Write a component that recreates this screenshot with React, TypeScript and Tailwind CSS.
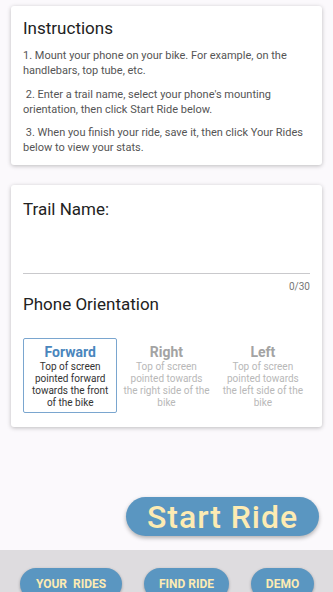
import React from 'react';

const options = [
  { title: 'Forward', desc: 'Top of screen pointed forward towards the front of the bike', selected: true },
  { title: 'Right', desc: 'Top of screen pointed towards the right side of the bike', selected: false },
  { title: 'Left', desc: 'Top of screen pointed towards the left side of the bike', selected: false },
];

export default function App() {
  return (
    <div className="flex h-[592px] w-[333px] flex-col overflow-hidden bg-[#fbf9fc] font-['Roboto',sans-serif]">
      <div className="flex-1 px-[11px] pt-[6px]">
        <div className="h-[159px] rounded-[3px] bg-white px-[12px] pt-[12px] shadow-[0_1px_4px_rgba(0,0,0,0.25)]">
          <h2 className="text-[17px] leading-[20px] text-[#222]">Instructions</h2>
          <div className="mt-[10px] text-[11px] leading-[15px] text-[#555]">
            <p>1. Mount your phone on your bike. For example, on the handlebars, top tube, etc.</p>
            <p className="mt-[9px]">&nbsp;2. Enter a trail name, select your phone's mounting orientation, then click Start Ride below.</p>
            <p className="mt-[8px]">&nbsp;3. When you finish your ride, save it, then click Your Rides below to view your stats.</p>
          </div>
        </div>

        <div className="mt-[20px] h-[242px] rounded-[3px] bg-white px-[12px] pt-[13px] shadow-[0_1px_4px_rgba(0,0,0,0.25)]">
          <div className="text-[17px] leading-[22px] text-[#222]">Trail Name:</div>
          <div className="mt-[53px] h-px bg-[#c9c9cc]" />
          <div className="mt-[7px] text-right text-[10px] leading-[12px] text-[#777]">0/30</div>
          <div className="text-[17px] leading-[22px] text-[#222]">Phone Orientation</div>
          <div className="mt-[23px] grid grid-cols-3 gap-[2px]">
            {options.map((o) => (
              <div
                key={o.title}
                className={
                  o.selected
                    ? 'flex h-[75px] flex-col items-center rounded-[2px] border border-[#7aa6cf] px-[3px] pt-[5px] text-center'
                    : 'flex h-[75px] flex-col items-center border border-transparent px-[3px] pt-[5px] text-center'
                }
              >
                <div
                  className={
                    o.selected
                      ? 'text-[14px] font-bold leading-[16px] text-[#4a86bd]'
                      : 'text-[14px] font-bold leading-[16px] text-[#a3a3a3]'
                  }
                >
                  {o.title}
                </div>
                <div
                  className={
                    o.selected
                      ? 'mt-[1px] text-[10px] leading-[12px] text-[#333]'
                      : 'mt-[1px] text-[10px] leading-[12px] text-[#b8b8b8]'
                  }
                >
                  {o.desc}
                </div>
              </div>
            ))}
          </div>
        </div>

        <div className="mt-[70px] flex justify-end pr-[3px]">
          <button className="flex h-[39px] w-[193px] items-center justify-center rounded-full bg-[#5a96c1] text-[32px] font-medium tracking-[0.03em] text-[#fdebb3] shadow-[0_2px_4px_rgba(0,0,0,0.3)]">
            Start Ride
          </button>
        </div>
      </div>

      <div className="flex h-[42px] items-start bg-[#dedcdf] pt-[18px]">
        <div className="flex w-full items-start pl-[20px]">
          <button className="h-[32px] w-[102px] rounded-full bg-[#5a96c1] text-[12px] font-bold text-[#fdebb3] shadow-[0_1px_3px_rgba(0,0,0,0.3)]">
            YOUR&nbsp;&nbsp;RIDES
          </button>
          <button className="ml-[22px] h-[32px] w-[85px] rounded-full bg-[#5a96c1] text-[12px] font-bold text-[#fdebb3] shadow-[0_1px_3px_rgba(0,0,0,0.3)]">
            FIND RIDE
          </button>
          <button className="ml-[22px] h-[32px] w-[63px] rounded-full bg-[#5a96c1] text-[12px] font-bold text-[#fdebb3] shadow-[0_1px_3px_rgba(0,0,0,0.3)]">
            DEMO
          </button>
        </div>
      </div>
    </div>
  );
}
